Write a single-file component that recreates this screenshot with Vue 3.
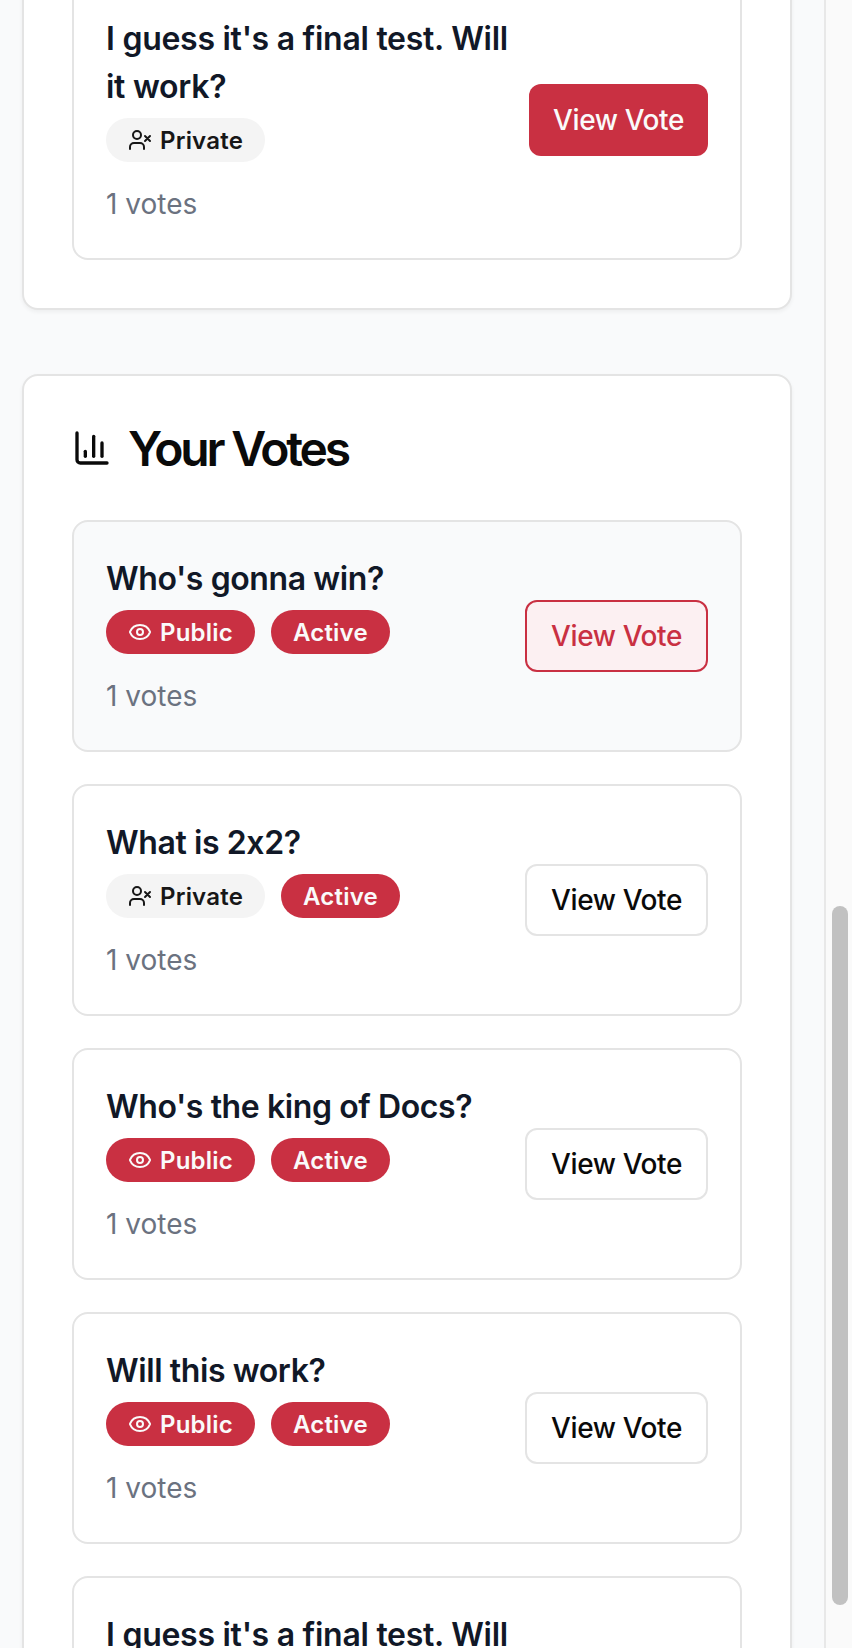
<script setup>
const closedVotes = [
  { title: "I guess it's a final test. Will it work?", access: 'Private', variant: 'solid', multiline: true },
]
const yourVotes = [
  { title: "Who's gonna win?", access: 'Public', active: true, variant: 'hover', hovered: true },
  { title: 'What is 2x2?', access: 'Private', active: true, variant: 'outline' },
  { title: "Who's the king of Docs?", access: 'Public', active: true, variant: 'outline' },
  { title: 'Will this work?', access: 'Public', active: true, variant: 'outline' },
  { title: "I guess it's a final test. Will it work?", access: 'Private', variant: 'outline', multiline: true },
]
const sections = [
  { items: closedVotes },
  { heading: 'Your Votes', items: yourVotes },
]
</script>

<template>
  <div class="page">
    <main class="content">
      <section v-for="(section, s) in sections" :key="s" class="panel">
        <h2 v-if="section.heading" class="heading">
          <svg class="chart" viewBox="0 0 24 24" aria-hidden="true">
            <path d="M3 3v16a2 2 0 0 0 2 2h16" />
            <path d="M18 17V9" />
            <path d="M13 17V5" />
            <path d="M8 17v-3" />
          </svg>
          <span class="heading-text">{{ section.heading }}</span>
        </h2>
        <div class="list">
          <article v-for="(item, i) in section.items" :key="i" class="item" :class="{ hovered: item.hovered }">
            <div class="info">
              <h3 class="title" :class="{ multiline: item.multiline }">{{ item.title }}</h3>
              <div class="badges">
                <span class="badge" :class="item.access.toLowerCase()">
                  <svg v-if="item.access === 'Public'" viewBox="0 0 24 24" aria-hidden="true">
                    <path d="M2.062 12.348a1 1 0 0 1 0-.696 10.75 10.75 0 0 1 19.876 0 1 1 0 0 1 0 .696 10.75 10.75 0 0 1-19.876 0" />
                    <circle cx="12" cy="12" r="3" />
                  </svg>
                  <svg v-else viewBox="0 0 24 24" aria-hidden="true">
                    <path d="M16 21v-2a4 4 0 0 0-4-4H6a4 4 0 0 0-4 4v2" />
                    <circle cx="9" cy="7" r="4" />
                    <path d="m17 8 5 5M22 8l-5 5" />
                  </svg>
                  <span class="badge-text">{{ item.access }}</span>
                </span>
                <span v-if="item.active" class="badge"><span class="badge-text">Active</span></span>
              </div>
              <p class="count">1 votes</p>
            </div>
            <button type="button" class="btn" :class="item.variant">View Vote</button>
          </article>
        </div>
      </section>
    </main>
    <div class="track"><div class="thumb"></div></div>
  </div>
</template>

<style>
html, body { margin: 0; overflow: hidden; }
</style>

<style scoped>
.page {
  display: flex;
  width: 852px;
  height: 1648px;
  overflow: hidden;
  background: #f9fafb;
  font-family: Inter, "Liberation Sans", sans-serif;
  font-feature-settings: "calt" 0;
  color: #0a0a0a;
}
.page *, .page { box-sizing: border-box; }
.content {
  flex: 1;
  display: flex;
  flex-direction: column;
  gap: 64px;
  padding: 0 32px 0 22px;
}
.panel {
  flex: none;
  padding: 48px;
  border: 2px solid #e4e4e4;
  border-radius: 16px;
  background: #fff;
  box-shadow: 0 2px 4px rgba(0, 0, 0, 0.05);
}
/* The first panel is scrolled partly out of view. */
.panel:first-child { margin-top: -70px; }
svg {
  flex: none;
  fill: none;
  stroke: currentColor;
  stroke-width: 2;
  stroke-linecap: round;
  stroke-linejoin: round;
}
.heading {
  display: flex;
  align-items: center;
  gap: 16px;
  height: 48px;
  margin: 0 0 48px;
  font-size: 48px;
  line-height: 48px;
  font-weight: 620;
  letter-spacing: -3.2px;
}
.heading-text { padding-top: 2px; }
.chart { width: 40px; height: 40px; }
.list { display: flex; flex-direction: column; gap: 32px; }
.item {
  display: flex;
  align-items: center;
  justify-content: space-between;
  padding: 32px;
  border: 2px solid #e4e4e4;
  border-radius: 16px;
}
.item.hovered { background: #f9fafb; }
.info { padding-bottom: 2px; }
.title {
  margin: 0;
  padding: 1px 0 7px;
  font-size: 32px;
  line-height: 48px;
  font-weight: 600;
  letter-spacing: -0.4px;
  color: #111827;
}
.title.multiline { letter-spacing: -0.27px; }
.badges { display: flex; gap: 16px; }
.badge {
  display: inline-flex;
  align-items: center;
  gap: 8px;
  height: 44px;
  padding: 0 22px;
  border-radius: 22px;
  background: #c93042;
  color: #fafafa;
  font-size: 24px;
  line-height: 32px;
  font-weight: 600;
  letter-spacing: 0.2px;
}
.badge-text { padding-top: 1px; }
.badge svg { width: 24px; height: 24px; }
.badge.private { background: #f4f4f4; color: #171717; }
.count {
  margin: 22px 0 0;
  font-size: 28px;
  line-height: 40px;
  color: #6b7280;
}
.btn {
  flex: none;
  height: 72px;
  padding: 0 24px;
  border: 0;
  border-radius: 12px;
  font: 500 28px/40px Inter, "Liberation Sans", sans-serif;
  letter-spacing: -0.4px;
  white-space: nowrap;
}
.solid { background: #c93042; color: #fafafa; }
.outline { border: 2px solid #e4e4e4; background: #fff; color: #0a0a0a; }
.hover { border: 2px solid #c93042; background: #fcf0f2; color: #c93042; }
.track {
  flex: none;
  width: 28px;
  padding: 906px 4px 0 6px;
  border-left: 2px solid #e8e8e8;
  background: #fafafa;
}
.thumb { height: 699px; width: 16px; border-radius: 8px; background: #c1c1c1; }
</style>
